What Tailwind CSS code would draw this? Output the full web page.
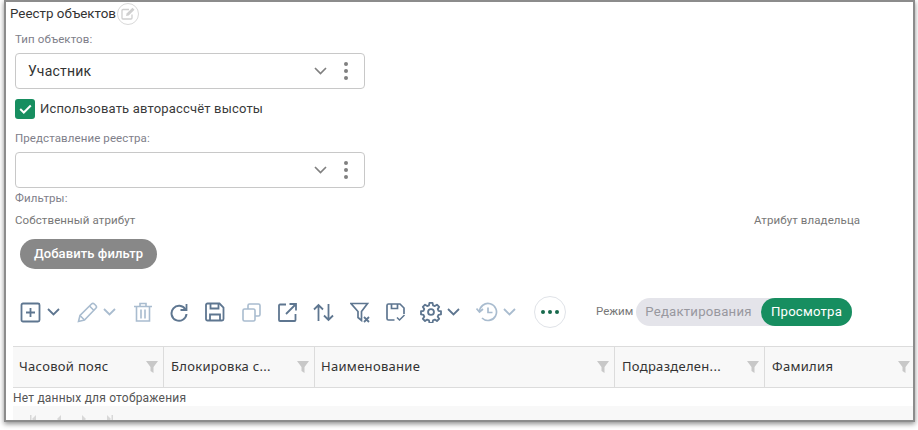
<!DOCTYPE html>
<html lang="ru">
<head>
  <meta charset="UTF-8" />
  <title>Реестр объектов</title>
  <script src="https://cdn.jsdelivr.net/npm/@tailwindcss/browser@4"></script>
</head>
<body class="bg-white font-['Roboto',sans-serif] text-[#333]">
  <div class="w-[918px] h-[430px] overflow-hidden bg-white pl-[4px]">
    <div class="w-[911px] h-[422px] border-2 border-[#8c8c8c] bg-white overflow-hidden shadow-[0_2px_5px_rgba(0,0,0,0.45)]">

      <!-- title -->
      <div class="flex items-center h-[23px] pl-[4px]">
        <span class="text-[13.400px] leading-[20px] text-[#333]">Реестр объектов</span>
        <span class="ml-[1px] w-[22px] h-[22px] rounded-full border border-[#d9d9d9] flex items-center justify-center">
          <svg width="15" height="13" viewBox="0 0 15 13" fill="none">
            <path d="M11 7.500V11a1 1 0 0 1-1 1H2a1 1 0 0 1-1-1V3.500a1 1 0 0 1 1-1h6" stroke="#cfcfcf" stroke-width="1.300"/>
            <path d="M5 9l.6-2.600L11.500.8l2 2-5.800 5.600z" fill="#cfcfcf"/>
          </svg>
        </span>
      </div>

      <!-- object type -->
      <div class="pl-[9px] w-[359px]">
        <div class="text-[11.500px] leading-[14px] text-[#80808a] mt-[7px] tracking-[0.1px]">Тип объектов:</div>
        <div class="mt-[7px] h-[36px] border border-[#c8c8c8] rounded-[4px] flex items-center pl-[12px]">
          <span class="flex-1 text-[14px] text-[#333] tracking-[0.2px]">Участник</span>
          <svg class="mr-[17px]" width="13" height="8" viewBox="0 0 13 8" fill="none"><path d="M1 1l5.500 5.500L12 1" stroke="#808080" stroke-width="1.700"/></svg>
          <span class="flex flex-col gap-[3px] mr-[16px]">
            <i class="block w-[4px] h-[4px] rounded-full bg-[#808080]"></i>
            <i class="block w-[4px] h-[4px] rounded-full bg-[#808080]"></i>
            <i class="block w-[4px] h-[4px] rounded-full bg-[#808080]"></i>
          </span>
        </div>

        <!-- checkbox -->
        <div class="flex items-center mt-[10px] h-[20px]">
          <span class="w-[20px] h-[20px] rounded-[3px] bg-[#178e60] flex items-center justify-center">
            <svg width="13" height="10" viewBox="0 0 13 10" fill="none"><path d="M1.200 5l3.600 3.500 7-7" stroke="#fff" stroke-width="2"/></svg>
          </span>
          <span class="ml-[5px] text-[13px] tracking-[0.18px] text-[#3a3a3a]">Использовать авторассчёт высоты</span>
        </div>

        <div class="text-[11.500px] leading-[14px] text-[#80808a] mt-[12px] tracking-[0.1px]">Представление реестра:</div>
        <div class="mt-[7px] h-[36px] border border-[#c8c8c8] rounded-[4px] flex items-center justify-end">
          <svg class="mr-[17px]" width="13" height="8" viewBox="0 0 13 8" fill="none"><path d="M1 1l5.500 5.500L12 1" stroke="#808080" stroke-width="1.700"/></svg>
          <span class="flex flex-col gap-[3px] mr-[16px]">
            <i class="block w-[4px] h-[4px] rounded-full bg-[#808080]"></i>
            <i class="block w-[4px] h-[4px] rounded-full bg-[#808080]"></i>
            <i class="block w-[4px] h-[4px] rounded-full bg-[#808080]"></i>
          </span>
        </div>
        <div class="text-[11.500px] leading-[14px] text-[#80808a] mt-[3px] tracking-[0.1px]">Фильтры:</div>
      </div>

      <!-- filters -->
      <div class="flex pl-[9px] mt-[8px] text-[11.500px] leading-[14px] text-[#777] tracking-[0.1px]">
        <span class="w-[739px]">Собственный атрибут</span>
        <span>Атрибут владельца</span>
      </div>
      <button class="ml-[14px] mt-[12px] block h-[30px] w-[137px] rounded-full bg-[#888888] text-white text-[13px] font-medium tracking-[0.1px]">Добавить фильтр</button>

      <!-- toolbar -->
      <div class="flex items-center h-[32px] mt-[27px] pl-[14px]">
        <svg class="text-[#5e7690]" width="21" height="21" viewBox="0 0 21 21" fill="none" stroke="currentColor" stroke-width="1.800">
          <rect x="1.500" y="1.500" width="18" height="18" rx="1.500"/><path d="M10.500 6v9M6 10.500h9"/>
        </svg>
        <svg class="ml-[6px] text-[#5e7690]" width="13" height="8" viewBox="0 0 13 8" fill="none" stroke="currentColor" stroke-width="1.800"><path d="M1 1l5.500 5.500L12 1"/></svg>
        <svg class="ml-[17px] text-[#a9bccf]" width="21" height="21" viewBox="0 0 21 21" fill="none" stroke="currentColor" stroke-width="1.600">
          <path d="M1.500 19.500l1.500-6L14.500 2a2 2 0 0 1 2.800 0l1.500 1.500a2 2 0 0 1 0 2.800L7.500 18z"/><path d="M3 13.500l4.500 4.500M12.500 4l4.500 4.500"/>
        </svg>
        <svg class="ml-[5px] text-[#a9bccf]" width="13" height="8" viewBox="0 0 13 8" fill="none" stroke="currentColor" stroke-width="1.800"><path d="M1 1l5.500 5.500L12 1"/></svg>
        <svg class="ml-[18px] text-[#a9bccf]" width="18" height="20" viewBox="0 0 18 20" fill="none" stroke="currentColor" stroke-width="1.600">
          <path d="M0 4.500h18M6 4.500V1.500h6v3M2.500 4.500v14.500h13V4.500M7 7.500v9M11 7.500v9"/>
        </svg>
        <svg class="ml-[18px] text-[#5e7690]" width="18" height="19" viewBox="0 0 18 19" fill="none" stroke="currentColor" stroke-width="2">
          <path d="M15.500 6.500a7.500 7.500 0 1 0 1 4.500"/><path d="M16.500 1v6h-6" stroke-width="1.800"/>
        </svg>
        <svg class="ml-[17px] text-[#5e7690]" width="20" height="20" viewBox="0 0 20 20" fill="none" stroke="currentColor" stroke-width="1.800">
          <path d="M2.500 1.500h12l4 4v11.500a1.500 1.500 0 0 1-1.500 1.500H2.500A1.500 1.500 0 0 1 1 17V3a1.500 1.500 0 0 1 1.500-1.500z"/><path d="M5.500 1.500v5h8v-5M5 18.500v-6h10v6"/>
        </svg>
        <svg class="ml-[17px] text-[#a9bccf]" width="19" height="19" viewBox="0 0 19 19" fill="none" stroke="currentColor" stroke-width="1.600">
          <rect x="1" y="6" width="12" height="12" rx="1.500"/><path d="M6 6V2.500A1.500 1.500 0 0 1 7.500 1h9A1.500 1.500 0 0 1 18 2.500v9a1.500 1.500 0 0 1-1.500 1.500H13"/>
        </svg>
        <svg class="ml-[17px] text-[#5e7690]" width="19" height="19" viewBox="0 0 19 19" fill="none" stroke="currentColor" stroke-width="1.800">
          <path d="M8 1.500H2a1 1 0 0 0-1 1V17a1 1 0 0 0 1 1h14.500a1 1 0 0 0 1-1V11"/><path d="M8 11L18 1M11.500 1H18v6.500"/>
        </svg>
        <svg class="ml-[16px] text-[#5e7690]" width="21" height="19" viewBox="0 0 21 19" fill="none" stroke="currentColor" stroke-width="1.800">
          <path d="M5.500 18V2M1 6.500L5.500 2 10 6.500M15.500 1v16M11 12.500l4.500 4.500 4.500-4.500"/>
        </svg>
        <svg class="ml-[16px] text-[#5e7690]" width="21" height="21" viewBox="0 0 21 21" fill="none" stroke="currentColor" stroke-width="1.700">
          <path d="M1 1.500h16.500L11.500 9.500v9l-3.500-3V9.500z"/><path d="M14 15l5 5M19 15l-5 5" stroke-width="1.800"/>
        </svg>
        <svg class="ml-[15px] text-[#5e7690]" width="20" height="19" viewBox="0 0 20 19" fill="none" stroke="currentColor" stroke-width="1.700">
          <path d="M8.500 17H2.500A1.500 1.500 0 0 1 1 15.500V2.500A1.500 1.500 0 0 1 2.500 1h11.500L18 5v6"/><path d="M5.500 1v4.500h6V1"/><path d="M11 14.500l2.500 2.500 5-5" stroke-width="1.500"/>
        </svg>
        <svg class="ml-[14px] text-[#5e7690]" width="22" height="22" viewBox="0 0 24 24" fill="none" stroke="currentColor" stroke-width="2">
          <circle cx="12" cy="12" r="3.200"/>
          <path d="M10.300 2h3.400l.5 2.700 2 .85 2.300-1.550 2.400 2.400-1.550 2.300.85 2 2.700.5v3.400l-2.700.5-.85 2 1.550 2.300-2.400 2.400-2.300-1.550-2 .85-.5 2.700h-3.400l-.5-2.700-2-.85-2.300 1.550-2.400-2.400 1.550-2.300-.85-2-2.700-.5v-3.400l2.700-.5.85-2-1.550-2.300 2.400-2.400 2.300 1.550 2-.85z" stroke-linejoin="round"/>
        </svg>
        <svg class="ml-[5px] text-[#5e7690]" width="13" height="8" viewBox="0 0 13 8" fill="none" stroke="currentColor" stroke-width="1.800"><path d="M1 1l5.500 5.500L12 1"/></svg>
        <svg class="ml-[16px] text-[#a9bccf]" width="22" height="20" viewBox="0 0 22 20" fill="none" stroke="currentColor" stroke-width="1.700">
          <path d="M3.500 10a8.500 8.500 0 1 1 2.500 6"/><path d="M.5 6.500l3 3.500 3.500-3M12 5.500V10.500h4.500"/>
        </svg>
        <svg class="ml-[5px] text-[#a9bccf]" width="13" height="8" viewBox="0 0 13 8" fill="none" stroke="currentColor" stroke-width="1.800"><path d="M1 1l5.500 5.500L12 1"/></svg>
        <span class="ml-[18px] w-[32px] h-[32px] rounded-full border border-[#e0e3e8] flex items-center justify-center gap-[2.500px]">
          <i class="block w-[4.500px] h-[4.500px] rounded-full bg-[#17694c]"></i>
          <i class="block w-[4.500px] h-[4.500px] rounded-full bg-[#17694c]"></i>
          <i class="block w-[4.500px] h-[4.500px] rounded-full bg-[#17694c]"></i>
        </span>
        <span class="ml-[30px] w-[37px] text-[11.500px] text-[#777] whitespace-nowrap">Режим</span>
        <div class="ml-[3px] flex items-center h-[28px] w-[216px] rounded-full bg-[#e4e4ea] text-[13.200px]">
          <span class="flex-1 text-center text-[#98989f] tracking-[0.2px]">Редактирования</span>
          <span class="w-[91px] h-[28px] leading-[28px] rounded-full bg-[#178e60] text-white text-center tracking-[0.2px]">Просмотра</span>
        </div>
      </div>

      <!-- table -->
      <div class="ml-[7px] mt-[18px] flex h-[42px] bg-[#f8f8f8] border-y border-[#dcdcdc] font-['Noto_Sans',sans-serif] text-[13px] text-[#333] tracking-[0.3px]">
        <div class="w-[151px] shrink-0 flex items-center pl-[6px] pr-[5px] border-r border-[#dcdcdc]">
          <span class="flex-1">Часовой пояс</span>
          <svg width="12" height="12" viewBox="0 0 12 12"><path d="M0 0h12L7.500 6v6l-3-2V6z" fill="#c8c8c8"/></svg>
        </div>
        <div class="w-[151px] shrink-0 flex items-center pl-[7px] pr-[5px] border-r border-[#dcdcdc]">
          <span class="flex-1">Блокировка с...</span>
          <svg width="12" height="12" viewBox="0 0 12 12"><path d="M0 0h12L7.500 6v6l-3-2V6z" fill="#c8c8c8"/></svg>
        </div>
        <div class="w-[300px] shrink-0 flex items-center pl-[6px] pr-[5px] border-r border-[#dcdcdc]">
          <span class="flex-1">Наименование</span>
          <svg width="12" height="12" viewBox="0 0 12 12"><path d="M0 0h12L7.500 6v6l-3-2V6z" fill="#c8c8c8"/></svg>
        </div>
        <div class="w-[150px] shrink-0 flex items-center pl-[7px] pr-[5px] border-r border-[#dcdcdc]">
          <span class="flex-1">Подразделен...</span>
          <svg width="12" height="12" viewBox="0 0 12 12"><path d="M0 0h12L7.500 6v6l-3-2V6z" fill="#c8c8c8"/></svg>
        </div>
        <div class="flex-1 flex items-center pl-[7px] pr-[3px]">
          <span class="flex-1">Фамилия</span>
          <svg width="12" height="12" viewBox="0 0 12 12"><path d="M0 0h12L7.500 6v6l-3-2V6z" fill="#c8c8c8"/></svg>
        </div>
      </div>
      <div class="ml-[7px] h-[18px] pt-[1px] leading-[18px] text-[12px] text-[#555] tracking-[0.2px]">Нет данных для отображения</div>

      <!-- pager, cut by the frame -->
      <div class="ml-[7px] h-[20px] bg-[#f8f8f8] pl-[17px] pt-[9px] flex gap-[21px] text-[#d8d8d8]">
        <svg width="6" height="8" viewBox="0 0 6 8" fill="currentColor"><path d="M0 0h1.500v8H0zM6 0v8L2 4z"/></svg>
        <svg width="4" height="8" viewBox="0 0 4 8" fill="currentColor"><path d="M4 0v8L0 4z"/></svg>
        <svg width="4" height="8" viewBox="0 0 4 8" fill="currentColor"><path d="M0 0v8l4-4z"/></svg>
        <svg width="6" height="8" viewBox="0 0 6 8" fill="currentColor"><path d="M6 0H4.500v8H6zM0 0v8l4-4z"/></svg>
      </div>
    </div>
  </div>
</body>
</html>
